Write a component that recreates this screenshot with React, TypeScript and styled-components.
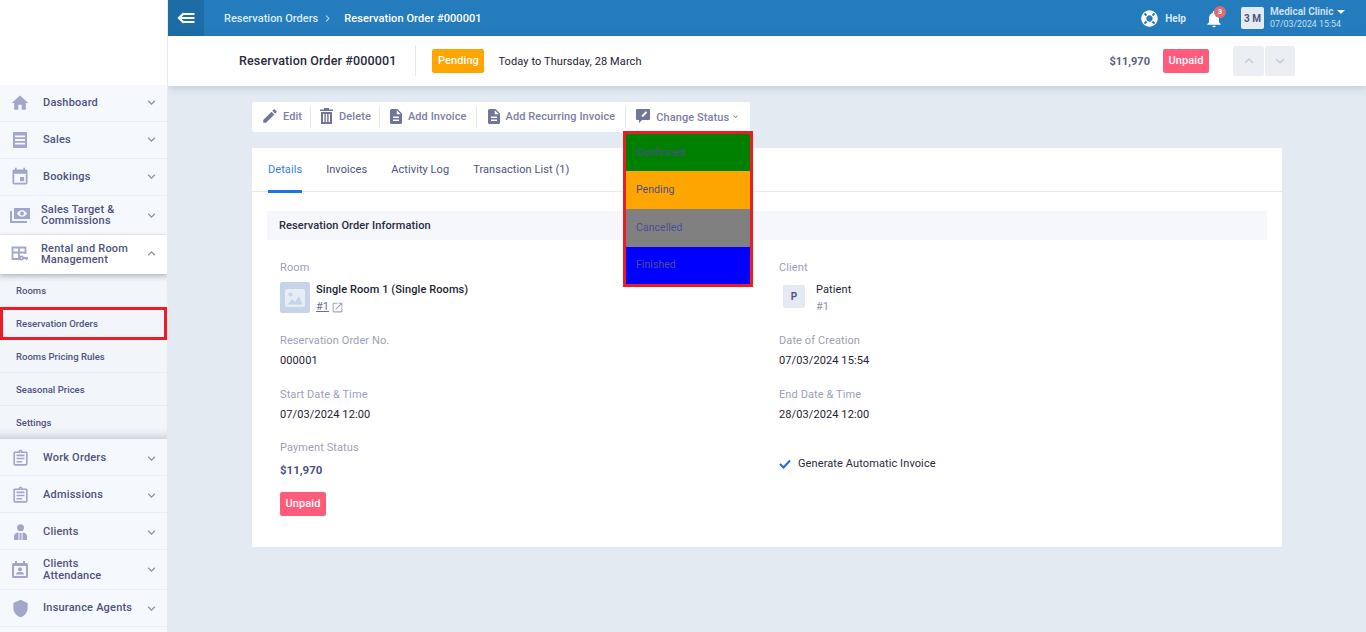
import React from "react";
import styled, { createGlobalStyle } from "styled-components";
import {
  MdHome, MdEvent, MdOutlineAssignment, MdEdit,
  MdKeyboardArrowDown, MdKeyboardArrowUp, MdNotifications, MdOpenInNew, MdShield, MdChevronRight,
} from "react-icons/md";
import { FaLifeRing } from "react-icons/fa";

const Global = createGlobalStyle`
  html, body { margin: 0; padding: 0; height: 100%; background: #e4eaf2; }
  * { box-sizing: border-box; }
  body { font-family: Roboto, "Liberation Sans", sans-serif; font-size: 11px; color: #1b1f33; }
`;

const Page = styled.div`
  width: 1366px; height: 632px; overflow: hidden; display: flex; background: #e4eaf2;
`;

const Sidebar = styled.aside`
  width: 168px; flex: none; height: 632px; overflow: hidden; background: #f5f8fc;
  border-right: 1px solid #e6ebf2; display: flex; flex-direction: column;
  position: relative; z-index: 3;
`;
const Logo = styled.div`height: 85px; flex: none; background: #fff;`;

const NavRow = styled.div<{ $h?: number; $open?: boolean; $pb?: number; $pt?: number }>`
  height: ${p => p.$h ?? 37}px; flex: none; display: flex; align-items: center;
  background: ${p => (p.$open ? "#fff" : "#f5f8fc")};
  border-bottom: 1px solid #e9edf4;
  padding: ${p => p.$pt ?? 0}px 8px ${p => p.$pb ?? 0}px 0;
  position: relative;
  z-index: ${p => (p.$open ? 1 : 0)};
  ${p => p.$open && "box-shadow: 0 2px 5px rgba(70,80,110,.28); border-bottom: 0;"}
`;
const NavIcon = styled.span<{ $w?: number }>`
  width: ${p => p.$w ?? 43}px; flex: none; display: flex; justify-content: center; padding-right: 3px; color: #a3a6cc;
  ${p => p.$w && "padding-right: 1px;"}
`;
const NavLabel = styled.span<{ $lh?: number }>`
  flex: 1; font-size: 11px; font-weight: 500; letter-spacing: .2px; color: #4e5381;
  line-height: ${p => p.$lh ?? 14}px;
`;
const Chevron = styled.span`
  color: #8d90a8; display: flex;
`;
const SubList = styled.div`
  flex: none; background: #f2f5f9; display: flex; flex-direction: column;
  box-shadow: inset 0 8px 8px -8px rgba(70,80,110,.2), inset 0 -12px 10px -10px rgba(70,80,110,.28);
`;
const SubRow = styled.div<{ $active?: boolean }>`
  height: 33px; flex: none; display: flex; align-items: center; padding-left: 16px;
  font-size: 9.500px; font-weight: 500; letter-spacing: .03px; color: #4e5381;
  border-bottom: 1px solid #e6eaf1;
  ${p => p.$active && "outline: 3px solid #ed1c24; outline-offset: -3px; border-bottom: 0;"}
  &:last-child { border-bottom: 0; }
`;

const Main = styled.main`flex: 1; min-width: 0; display: flex; flex-direction: column;`;

const TopBar = styled.header`
  height: 36px; flex: none; background: #247cbd; color: #fff; display: flex; align-items: center;
`;
const BackBtn = styled.div`
  width: 36px; height: 36px; background: #1e6ca6; display: flex; align-items: center; justify-content: center;
`;
const Crumbs = styled.nav`
  margin-left: 20px; display: flex; align-items: center; font-size: 11px; font-weight: 500; flex: 1;
  color: #dcebf6;
  svg { margin: 0 3px 0 3px; color: #b7d4ea; }
`;
const CrumbNow = styled.span`color: #fff; margin-left: 7px; letter-spacing: .08px;`;
const HelpBox = styled.div`
  display: flex; align-items: center; gap: 7px; color: #d8e8f4; font-weight: 700; font-size: 10px;
`;
const Bell = styled.div`
  position: relative; margin-left: 18px; width: 20px; height: 20px; display: flex;
`;
const Badge = styled.span`
  position: absolute; top: -2px; right: -2px; width: 12px; height: 12px; border-radius: 50%;
  background: #d76d78; color: #fff; font-size: 7px; font-weight: 700;
  display: flex; align-items: center; justify-content: center;
`;
const Avatar = styled.div`
  margin-left: 17px; width: 23px; height: 22px; background: #e4eaf2; border-radius: 2px;
  color: #4e5381; font-size: 10px; font-weight: 700; display: flex; align-items: center; justify-content: center;
`;
const Account = styled.div`
  margin-left: 6px; margin-right: 18px; width: 78px; color: #c8dff0; font-size: 8.800px; line-height: 12px;
`;
const AccountName = styled.div`
  font-weight: 700; font-size: 10px; display: flex; align-items: center; gap: 4px; white-space: nowrap;
  &::after { content: ""; border: 4px solid transparent; border-top-color: #fff; border-bottom: 0; }
`;

const SubHeader = styled.section`
  height: 50px; flex: none; background: #fff; display: flex; align-items: center;
  box-shadow: 0 2px 8px rgba(70,80,110,.22); padding-left: 71px; position: relative; z-index: 1;
`;
const Title = styled.div`
  font-size: 12.500px; font-weight: 500; letter-spacing: .14px; color: #2a2b3d; height: 30px; line-height: 29px;
  padding-right: 19px; border-right: 1px solid #e4e9f0;
`;
const StatusPill = styled.span<{ $bg: string }>`
  background: ${p => p.$bg}; color: #fff; font-size: 11px; letter-spacing: .1px; font-weight: 500; border-radius: 2px;
  height: 24px; display: inline-flex; align-items: center; justify-content: center; padding: 0 5.500px 2px;
`;
const TitlePill = styled(StatusPill)`margin-left: 16px;`;
const DateText = styled.span`margin-left: 14px; font-size: 11px; letter-spacing: .1px; color: #1f2233; flex: 1;`;
const Amount = styled.span`font-size: 11px; font-weight: 700; color: #5a5e86; margin-right: 13px;`;
const Pager = styled.div`display: flex; gap: 1px; margin-left: 24px; margin-right: 71px;`;
const PagerBtn = styled.div<{ $w: number }>`
  width: ${p => p.$w}px; height: 30px; background: #ebeff4; border-radius: 2px; color: #c5cad9;
  display: flex; align-items: center; justify-content: center;
`;

const Content = styled.div`
  flex: 1; padding: 16px 84px 0; position: relative; min-height: 0;
`;
const Toolbar = styled.div`
  width: 498px; height: 30px; background: #fff; border-radius: 2px; display: flex; align-items: center;
  position: relative;
`;
const ToolBtn = styled.div<{ $pad: string; $gap?: number; $last?: boolean }>`
  height: 22px; display: flex; align-items: center; gap: ${p => p.$gap ?? 6}px; padding: ${p => p.$pad};
  font-size: 11px; font-weight: 500; letter-spacing: .08px; color: #7d80a3; white-space: nowrap;
  ${p => !p.$last && "border-right: 1px solid #e4e9f0;"}
  svg { color: #72759a; flex: none; }
`;
const StatusText = styled.span`padding-top: 2px;`;
const Dropdown = styled.div`
  position: absolute; left: 371px; top: 29px; width: 130px; border: 3px solid #ed1c24; z-index: 2;
`;
const DropItem = styled.div<{ $bg: string; $h: number; $up?: boolean }>`
  background: ${p => p.$bg}; height: ${p => p.$h}px; display: flex; align-items: center; padding: 0 0 ${p => (p.$up ? 2 : 0)}px 10px;
  font-size: 10.500px; color: #4b4f90; letter-spacing: .05px;
`;

const Card = styled.div`
  margin-top: 16px; width: 1030px; height: 399px; background: #fff; display: flex; flex-direction: column;
`;
const Tabs = styled.div`
  height: 44px; flex: none; display: flex; gap: 24px; padding-left: 16px; border-bottom: 1px solid #e4eaf2;
`;
const Tab = styled.div<{ $active?: boolean }>`
  font-size: 11px; letter-spacing: .07px; height: 45px; padding-top: 15px; line-height: 13px;
  color: ${p => (p.$active ? "#2f80ed" : "#4e5381")};
  ${p => p.$active && "border-bottom: 3px solid #1a73e8;"}
`;
const SectionHead = styled.div`
  margin: 19px 15px 0; height: 29px; background: #f5f7fb; padding-left: 12px; display: flex; align-items: center;
  font-size: 11px; font-weight: 500; letter-spacing: .1px; color: #2a2b3d;
`;
const Grid = styled.div`
  display: grid; grid-template-columns: 499px 1fr; padding: 21px 0 0 28px;
`;
const Column = styled.div`display: flex; flex-direction: column;`;
const FieldLabel = styled.div`font-size: 11px; letter-spacing: .1px; line-height: 14px; color: #9c9fb8;`;
const FieldValue = styled.div`font-size: 11px; letter-spacing: .1px; line-height: 14px; color: #1f2233; margin-top: 6px;`;
const Field = styled.div<{ $h: number }>`height: ${p => p.$h}px; flex: none;`;
const EntityRow = styled.div`display: flex; align-items: flex-start; margin-top: 7px;`;
const Thumb = styled.div`
  width: 30px; height: 31px; background: #c5d4e8; border-radius: 2px; display: flex; align-items: center; justify-content: center;
`;
const EntityText = styled.div<{ $ml?: number }>`margin-left: ${p => p.$ml ?? 6}px; line-height: 14px;`;
const EntityName = styled.div<{ $bold?: boolean }>`
  font-size: 11px; letter-spacing: .1px; font-weight: ${p => (p.$bold ? 500 : 400)}; color: #1b1f33; margin-top: 1px;
`;
const RefLink = styled.div`
  display: flex; align-items: center; gap: 2px; margin-top: 3px; font-size: 11px; color: #6a6e96;
  span { text-decoration: underline; }
  svg { color: #9fa6c0; }
`;
const ClientRef = styled.div`font-size: 11px; color: #8e92b2; margin-top: 3px;`;
const Initial = styled.div`
  width: 22px; height: 23px; margin: 3px 11px 0 4px; background: #e4eaf2; border-radius: 2px; color: #4e5381;
  font-size: 10px; font-weight: 700; display: flex; align-items: center; justify-content: center;
`;
const Money = styled.div`font-size: 11.500px; font-weight: 700; color: #4e5381; margin-top: 8px;`;
const PayPill = styled(StatusPill)`margin-top: 15px;`;
const CheckRow = styled.div`
  display: flex; align-items: center; gap: 7px; margin-top: 16px; font-size: 11px; letter-spacing: .1px; color: #2a2b3d;
`;

const SalesIcon = () => (
  <svg width="16" height="18" viewBox="0 0 16 18" fill="currentColor">
    <path d="M1 1h14v16H1z M3 4.500v1.800h10V4.500z M3 8.100v1.800h10V8.100z M3 11.700v1.800h10v-1.800z" fillRule="evenodd" />
  </svg>
);
const MoneyIcon = () => (
  <svg width="20" height="15" viewBox="0 0 20 15" fill="currentColor">
    <path fillRule="evenodd" d="M4 0h16v11H4zM12 2.200c-2.200 0-4 1.500-5 3.300 1 1.800 2.800 3.300 5 3.300s4-1.500 5-3.300c-1-1.800-2.800-3.300-5-3.300z" />
    <circle cx="12" cy="5.500" r="2" />
    <path d="M0 3h2v10h15v2H0z" />
  </svg>
);
const RentalIcon = () => (
  <svg width="18" height="16" viewBox="0 0 18 16" fill="none" stroke="currentColor" strokeWidth="1.800">
    <path d="M9 13H1.500V1.500h13V8M1.500 6.500h13M8 1.500V13" />
    <circle cx="10.500" cy="12" r="1.600" />
    <path d="M12 12h5M15.500 12v2" />
  </svg>
);
const ClientsIcon = () => (
  <svg width="15" height="16" viewBox="0 0 15 16" fill="currentColor">
    <circle cx="7.500" cy="3.800" r="3.500" />
    <path d="M1 16v-3.500C1 10 3 8.800 5.500 8.600v7.400zM14 16v-3.500c0-2.500-2-3.700-4.500-3.900v7.400zM6.500 9h2v7h-2z" />
  </svg>
);
const AttendanceIcon = () => (
  <svg width="16" height="17" viewBox="0 0 16 17" fill="currentColor">
    <path fillRule="evenodd" d="M3 0h2v2h6V0h2v2h1.500A1.500 1.500 0 0 1 16 3.500v12A1.500 1.500 0 0 1 14.500 17h-13A1.500 1.500 0 0 1 0 15.500v-12A1.500 1.500 0 0 1 1.500 2H3zM2 5v10h12V5z" />
    <circle cx="8" cy="8.200" r="2" />
    <path d="M4 13.500c0-2 2-2.700 4-2.700s4 .7 4 2.700z" />
  </svg>
);
const BackIcon = () => (
  <svg width="18" height="12" viewBox="0 0 18 12" fill="#fff">
    <path d="M6 .4 7.600 2 3.600 6l4 4L6 11.600.4 6z" />
    <path d="M7 1h10.500v2H7zM4 5h13.500v2H4zM7 9h10.500v2H7z" />
  </svg>
);
const ImageIcon = () => (
  <svg width="20" height="18" viewBox="0 0 20 18">
    <rect width="20" height="18" rx="2" fill="#e6edf6" />
    <circle cx="5.500" cy="5.500" r="2" fill="#c5d4e8" />
    <path d="M2.500 15.500 7 10l3 3 4-6 3.500 8.500z" fill="#c5d4e8" />
  </svg>
);
const TrashIcon = () => (
  <svg width="13" height="16" viewBox="0 0 13 16" fill="currentColor">
    <path d="M4 0h5v1.500h4V3H0V1.500h4z" />
    <path fillRule="evenodd" d="M1 4h11v12H1zM3 6v8h1.400V6zM5.800 6v8h1.400V6zM8.600 6v8H10V6z" />
  </svg>
);
const DocIcon = () => (
  <svg width="12" height="15" viewBox="4 2 16 20" fill="currentColor">
    <path d="M14 2H6a2 2 0 0 0-2 2v16a2 2 0 0 0 2 2h12a2 2 0 0 0 2-2V8zm2 16H8v-2h8zm0-4H8v-2h8zm-3-5V3.500L18.500 9z" />
  </svg>
);
const BubbleIcon = () => (
  <svg width="14" height="14" viewBox="0 0 14 14" fill="currentColor">
    <path d="M1 0h12a1 1 0 0 1 1 1v9a1 1 0 0 1-1 1H6l-3 3v-3H1a1 1 0 0 1-1-1V1a1 1 0 0 1 1-1z" />
    <path d="M10.500 3 6 7.500" stroke="#fff" strokeWidth="2" fill="none" />
  </svg>
);
const CheckIcon = () => (
  <svg width="12" height="10" viewBox="0 0 12 10" fill="none" stroke="#2a6fd6" strokeWidth="2.200">
    <path d="M1 5l3.500 3.500L11 1.500" />
  </svg>
);

type NavItem = { label: React.ReactNode; icon: React.ReactNode; h?: number; lh?: number; w?: number; open?: boolean; pb?: number; pt?: number };
const clip = <MdOutlineAssignment size={19} />;

const upper: NavItem[] = [
  { label: "Dashboard", icon: <MdHome size={20} />, pb: 1 },
  { label: "Sales", icon: <SalesIcon />, pb: 1 },
  { label: "Bookings", icon: <MdEvent size={20} />, pb: 1 },
  { label: <>Sales Target &amp;<br />Commissions</>, icon: <MoneyIcon />, h: 39, lh: 11, w: 41 },
  { label: <>Rental and Room<br />Management</>, icon: <RentalIcon />, h: 39, lh: 11, w: 41, open: true, pb: 2 },
];
const subs = ["Rooms", "Reservation Orders", "Rooms Pricing Rules", "Seasonal Prices", "Settings"];
const lower: NavItem[] = [
  { label: "Work Orders", icon: clip, pt: 2 },
  { label: "Admissions", icon: clip, pt: 2 },
  { label: "Clients", icon: <ClientsIcon />, pt: 2 },
  { label: <>Clients<br />Attendance</>, icon: <AttendanceIcon />, h: 40, lh: 12 },
  { label: "Insurance Agents", icon: <MdShield size={19} /> },
];

const Nav = ({ item }: { item: NavItem }) => (
  <NavRow $h={item.h} $open={item.open} $pb={item.pb} $pt={item.pt}>
    <NavIcon $w={item.w}>{item.icon}</NavIcon>
    <NavLabel $lh={item.lh}>{item.label}</NavLabel>
    <Chevron>{item.open ? <MdKeyboardArrowUp size={15} /> : <MdKeyboardArrowDown size={15} />}</Chevron>
  </NavRow>
);

export default function App() {
  return (
    <>
      <Global />
      <Page>
        <Sidebar>
          <Logo />
          {upper.map((n, i) => <Nav key={i} item={n} />)}
          <SubList>
            {subs.map((s, i) => <SubRow key={s} $active={i === 1}>{s}</SubRow>)}
          </SubList>
          {lower.map((n, i) => <Nav key={i} item={n} />)}
          <NavRow />
        </Sidebar>
        <Main>
          <TopBar>
            <BackBtn><BackIcon /></BackBtn>
            <Crumbs>
              Reservation Orders
              <MdChevronRight size={13} />
              <CrumbNow>Reservation Order #000001</CrumbNow>
            </Crumbs>
            <HelpBox><FaLifeRing size={17} color="#fff" />Help</HelpBox>
            <Bell><MdNotifications size={22} color="#fff" /><Badge>3</Badge></Bell>
            <Avatar>3 M</Avatar>
            <Account>
              <AccountName>Medical Clinic</AccountName>
              07/03/2024 15:54
            </Account>
          </TopBar>
          <SubHeader>
            <Title>Reservation Order #000001</Title>
            <TitlePill $bg="#ffa500">Pending</TitlePill>
            <DateText>Today to Thursday, 28 March</DateText>
            <Amount>$11,970</Amount>
            <StatusPill $bg="#ff5c7c">Unpaid</StatusPill>
            <Pager>
              <PagerBtn $w={31}><MdKeyboardArrowUp size={18} /></PagerBtn>
              <PagerBtn $w={30}><MdKeyboardArrowDown size={18} /></PagerBtn>
            </Pager>
          </SubHeader>
          <Content>
            <Toolbar>
              <ToolBtn $pad="0 8px 2px 9px" $gap={4}><MdEdit size={18} />Edit</ToolBtn>
              <ToolBtn $pad="0 8px 2px 9px"><TrashIcon />Delete</ToolBtn>
              <ToolBtn $pad="0 9px 2px 10px"><DocIcon />Add Invoice</ToolBtn>
              <ToolBtn $pad="0 10px 2px 11px"><DocIcon />Add Recurring Invoice</ToolBtn>
              <ToolBtn $pad="0 0 2px 10px" $last>
                <BubbleIcon />
                <StatusText>Change Status</StatusText>
                <MdKeyboardArrowDown size={9} style={{ marginLeft: -4 }} />
              </ToolBtn>
              <Dropdown>
                <DropItem $bg="#008000" $h={37}>Confirmed</DropItem>
                <DropItem $bg="#ffa500" $h={38} $up>Pending</DropItem>
                <DropItem $bg="#808080" $h={38} $up>Cancelled</DropItem>
                <DropItem $bg="#0000ff" $h={37} $up>Finished</DropItem>
              </Dropdown>
            </Toolbar>
            <Card>
              <Tabs>
                <Tab $active>Details</Tab>
                <Tab>Invoices</Tab>
                <Tab>Activity Log</Tab>
                <Tab>Transaction List (1)</Tab>
              </Tabs>
              <SectionHead>Reservation Order Information</SectionHead>
              <Grid>
                <Column>
                  <Field $h={73}>
                    <FieldLabel>Room</FieldLabel>
                    <EntityRow>
                      <Thumb><ImageIcon /></Thumb>
                      <EntityText>
                        <EntityName $bold>Single Room 1 (Single Rooms)</EntityName>
                        <RefLink><span>#1</span><MdOpenInNew size={13} /></RefLink>
                      </EntityText>
                    </EntityRow>
                  </Field>
                  <Field $h={54}>
                    <FieldLabel>Reservation Order No.</FieldLabel>
                    <FieldValue>000001</FieldValue>
                  </Field>
                  <Field $h={53}>
                    <FieldLabel>Start Date &amp; Time</FieldLabel>
                    <FieldValue>07/03/2024 12:00</FieldValue>
                  </Field>
                  <Field $h={80}>
                    <FieldLabel>Payment Status</FieldLabel>
                    <Money>$11,970</Money>
                    <PayPill $bg="#ff5c7c">Unpaid</PayPill>
                  </Field>
                </Column>
                <Column>
                  <Field $h={73}>
                    <FieldLabel>Client</FieldLabel>
                    <EntityRow>
                      <Initial>P</Initial>
                      <EntityText $ml={0}>
                        <EntityName>Patient</EntityName>
                        <ClientRef>#1</ClientRef>
                      </EntityText>
                    </EntityRow>
                  </Field>
                  <Field $h={54}>
                    <FieldLabel>Date of Creation</FieldLabel>
                    <FieldValue>07/03/2024 15:54</FieldValue>
                  </Field>
                  <Field $h={53}>
                    <FieldLabel>End Date &amp; Time</FieldLabel>
                    <FieldValue>28/03/2024 12:00</FieldValue>
                  </Field>
                  <CheckRow><CheckIcon />Generate Automatic Invoice</CheckRow>
                </Column>
              </Grid>
            </Card>
          </Content>
        </Main>
      </Page>
    </>
  );
}
